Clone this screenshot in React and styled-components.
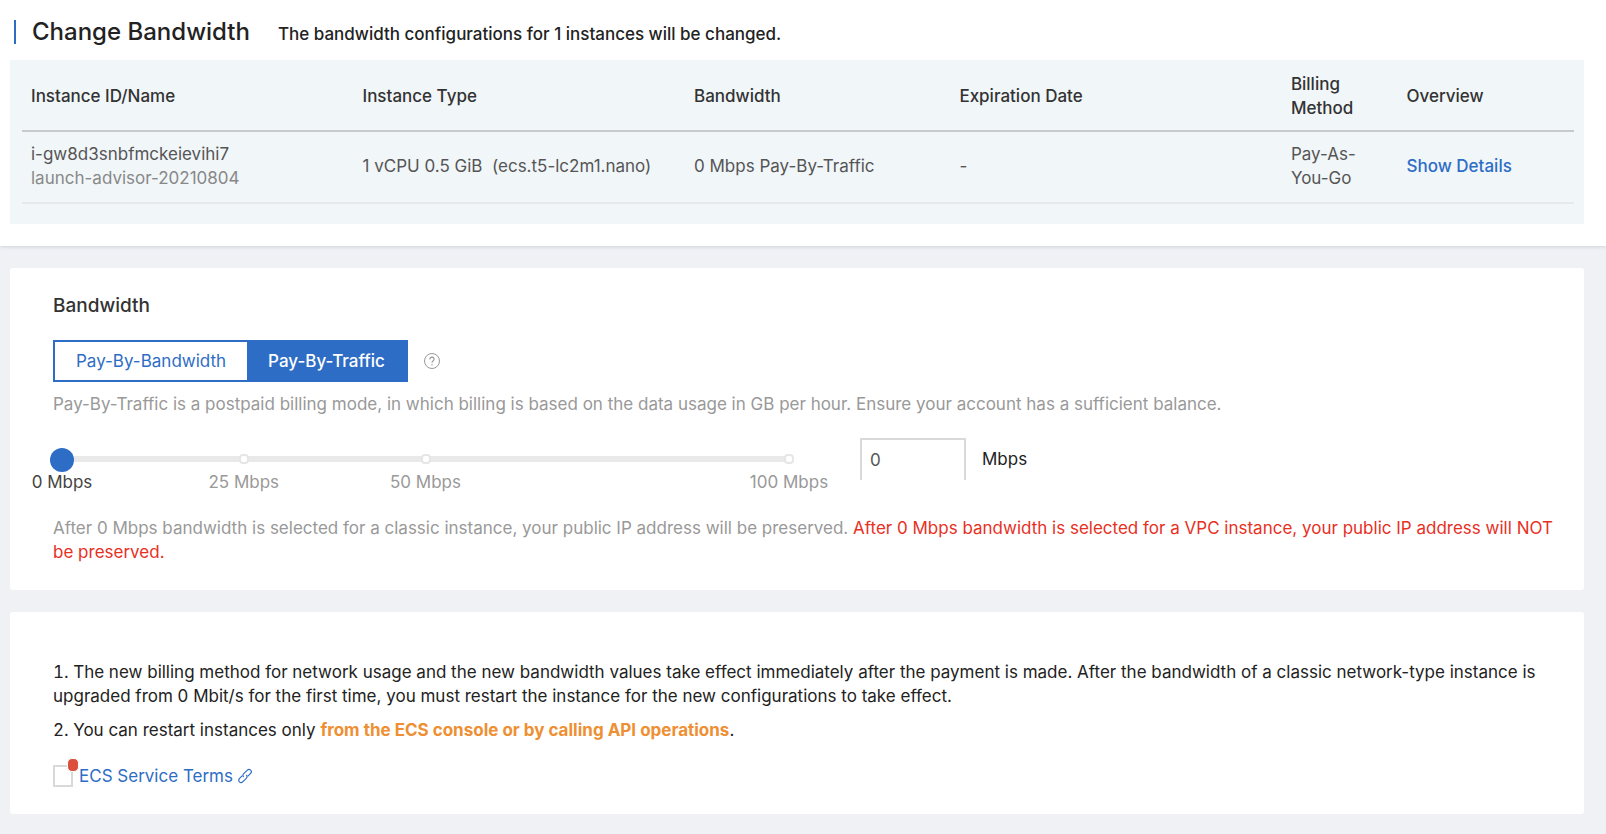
import React, { useState } from "react";
import styled, { createGlobalStyle } from "styled-components";

const blue = "#2e6dc5";

const GlobalStyle = createGlobalStyle`
  *, *::before, *::after { box-sizing: border-box; }
  body {
    margin: 0;
    background: #eff1f5;
    color: #222;
    font: 400 17px/24px Inter, "Liberation Sans", sans-serif;
  }
  button, input { font: inherit; }
`;

const Page = styled.div`
  display: flex;
  flex-direction: column;
  gap: 22px;
  padding-bottom: 20px;
`;

const Header = styled.header`
  background: #fff;
  padding: 14px 22px 22px 10px;
  box-shadow: 0 1px 4px rgba(40, 60, 80, 0.16);
`;

const TitleRow = styled.div`
  display: flex;
  align-items: baseline;
  margin: 0 0 10px 4px;

  &::before {
    content: "";
    align-self: center;
    width: 2px;
    height: 24px;
    background: ${blue};
  }
`;

const Title = styled.h1`
  margin: 0 28px 0 16px;
  font-size: 24px;
  line-height: 36px;
  font-weight: 500;
`;

const Subtitle = styled.p`
  margin: 0;
  font-weight: 500;
`;

const TablePanel = styled.div`
  background: #f1f6f9;
  padding: 0 10px 20px 12px;
`;

const Table = styled.table`
  width: 100%;
  table-layout: fixed;
  border-spacing: 0;
  text-align: left;
`;

const HeadCell = styled.th`
  width: ${(p) => p.$width};
  padding: 12px 9px 10px;
  border-bottom: 2px solid #c9cacb;
  color: #333;
  font-weight: 500;
`;

const Cell = styled.td`
  padding: 10px 9px 12px;
  border-bottom: 2px solid #e7e9ea;
  color: #555;
`;

const InstanceName = styled.div`
  color: #888;
`;

const TextLink = styled.a`
  color: ${blue};
  font-weight: ${(p) => (p.$strong ? 500 : 400)};
  text-decoration: none;
`;

const Card = styled.section`
  margin: 0 22px 0 10px;
  padding: ${(p) => p.$top}px 30px 26px 43px;
  border-radius: 3px;
  background: #fff;
`;

const CardTitle = styled.h2`
  margin: 0 0 22px;
  color: #333;
  font-size: 19px;
  line-height: 24px;
  font-weight: 500;
`;

const BillingRow = styled.div`
  display: flex;
  align-items: center;
  gap: 15px;
`;

const Segmented = styled.div`
  display: flex;
  border: 2px solid ${blue};
`;

const Segment = styled.button`
  height: 38px;
  padding: 0 21px;
  border: 0;
  background: ${(p) => (p.$active ? blue : "#fff")};
  color: ${(p) => (p.$active ? "#fff" : blue)};
  font-weight: ${(p) => (p.$active ? 500 : 400)};
  cursor: pointer;
`;

const HelpButton = styled.button`
  display: flex;
  padding: 0;
  border: 0;
  background: none;
  color: #999;
`;

const Hint = styled.p`
  margin: 10px 0 22px;
  color: #999;
`;

const Note = styled.p`
  margin: 22px 0 0;
  color: #999;
`;

const Warning = styled.span`
  color: #e8301f;
`;

const SliderRow = styled.div`
  display: flex;
  align-items: flex-start;
`;

const Slider = styled.div`
  display: grid;
  flex: 0 1 751px;
  margin: 10px 59px 0 -3px;
`;

const Range = styled.input`
  grid-area: 1 / 1;
  appearance: none;
  width: 100%;
  height: 24px;
  margin: 0;
  background: linear-gradient(#e9e9e9, #e9e9e9) center 8px / calc(100% - 24px) 6px no-repeat;

  &::-webkit-slider-thumb {
    appearance: none;
    width: 24px;
    height: 24px;
    border-radius: 50%;
    background: ${blue};
  }
`;

const Scale = styled.div`
  grid-area: 1 / 1;
  display: flex;
  padding: 6px 12px 0;
  pointer-events: none;
`;

const ScaleSpan = styled.div`
  display: flex;
  flex: ${(p) => p.$span} 1 0;
  justify-content: flex-end;
`;

const Tick = styled.div`
  display: flex;
  flex-direction: column;
  align-items: center;
  gap: 6px;
  width: 0;
  white-space: nowrap;
  color: ${(p) => (p.$active ? "#444" : "#999")};
`;

const Dot = styled.i`
  width: 10px;
  height: 10px;
  border: 2px solid #e6e6e6;
  border-radius: 4px;
  background: #fff;
  visibility: ${(p) => (p.$hidden ? "hidden" : "visible")};
`;

const Amount = styled.label`
  display: flex;
  align-items: center;
  gap: 16px;
`;

const AmountInput = styled.input`
  width: 106px;
  height: 42px;
  padding: 0 8px;
  border: 2px solid #d9d9d9;
  border-bottom: 0;
  border-radius: 0;
  background: #fff;
  color: #555;
`;

const Notes = styled.ol`
  display: flex;
  flex-direction: column;
  gap: 10px;
  margin: 0 0 22px;
  padding: 0;
  list-style: decimal inside;
`;

const ConsoleLink = styled.a`
  color: #ee8f33;
  font-weight: 700;
  text-decoration: none;
`;

const Terms = styled.div`
  display: flex;
  align-items: center;
  gap: 6px;
`;

const CheckWrap = styled.span`
  position: relative;
  display: flex;
`;

const Checkbox = styled.input`
  appearance: none;
  width: 20px;
  height: 22px;
  margin: 0;
  border: 2px solid #d9d9d9;
  background: #fff;

  &:checked { background: ${blue}; }
`;

const Badge = styled.span`
  position: absolute;
  top: -7px;
  right: -6px;
  width: 12px;
  height: 14px;
  border: 1px solid #fff;
  border-radius: 5px;
  background: #dc4f3c;
`;

const TermsLink = styled(TextLink)`
  display: flex;
  align-items: center;
  gap: 4px;
`;

function HelpIcon() {
  return (
    <svg width="18" height="18" viewBox="0 0 18 18" fill="none" stroke="currentColor" aria-hidden="true">
      <circle cx="9" cy="9" r="7.5" strokeWidth="1" />
      <path d="M6.9 7.4C6.9 6 7.8 5.1 9 5.1s2.1.9 2.1 2.1c0 1.5-2.1 1.6-2.1 3.5" strokeWidth="1.1" />
      <circle cx="9" cy="12.7" r=".7" fill="currentColor" stroke="none" />
    </svg>
  );
}

function ChainIcon() {
  return (
    <svg width="16" height="16" viewBox="0 0 16 16" fill="none" stroke="currentColor" strokeWidth="1.2" strokeLinecap="round" aria-hidden="true">
      <path d="M6.3 8.6C5.7 7.5 5.9 6.5 6.7 5.7l3.4-3.3c1.1-1.1 2.5-1.2 3.5-.3 1 1 .9 2.4-.2 3.5l-2.2 2.2" />
      <path d="M9.7 7.4c.6 1.1.4 2.1-.4 2.9l-3.4 3.3c-1.1 1.1-2.5 1.2-3.5.3-1-1-.9-2.4.2-3.5l2.2-2.2" />
    </svg>
  );
}

const columns = [
  ["Instance ID/Name", "21.36%"],
  ["Instance Type", "21.36%"],
  ["Bandwidth", "17.1%"],
  ["Expiration Date", "21.36%"],
  ["Billing Method", "7.45%"],
  ["Overview", "11.37%"],
];

const ticks = [
  { value: 0, span: 0 },
  { value: 25, span: 25 },
  { value: 50, span: 25 },
  { value: 100, span: 50 },
];

const modes = ["Pay-By-Bandwidth", "Pay-By-Traffic"];

export default function App() {
  const [mode, setMode] = useState("Pay-By-Traffic");
  const [mbps, setMbps] = useState(0);

  return (
    <>
      <GlobalStyle />
      <Page>
        <Header>
          <TitleRow>
            <Title>Change Bandwidth</Title>
            <Subtitle>The bandwidth configurations for 1 instances will be changed.</Subtitle>
          </TitleRow>
          <TablePanel>
            <Table>
              <thead>
                <tr>
                  {columns.map(([name, width]) => (
                    <HeadCell key={name} $width={width} scope="col">{name}</HeadCell>
                  ))}
                </tr>
              </thead>
              <tbody>
                <tr>
                  <Cell>
                    i-gw8d3snbfmckeievihi7
                    <InstanceName>launch-advisor-20210804</InstanceName>
                  </Cell>
                  <Cell>1 vCPU 0.5 GiB&nbsp; (ecs.t5-lc2m1.nano)</Cell>
                  <Cell>0 Mbps Pay-By-Traffic</Cell>
                  <Cell>-</Cell>
                  <Cell>Pay-As-You-Go</Cell>
                  <Cell><TextLink $strong href="#details">Show Details</TextLink></Cell>
                </tr>
              </tbody>
            </Table>
          </TablePanel>
        </Header>

        <Card $top={26}>
          <CardTitle>Bandwidth</CardTitle>
          <BillingRow>
            <Segmented role="group" aria-label="Billing mode">
              {modes.map((name) => (
                <Segment
                  key={name}
                  type="button"
                  $active={name === mode}
                  aria-pressed={name === mode}
                  onClick={() => setMode(name)}
                >
                  {name}
                </Segment>
              ))}
            </Segmented>
            <HelpButton type="button" aria-label="Help"><HelpIcon /></HelpButton>
          </BillingRow>
          <Hint>
            Pay-By-Traffic is a postpaid billing mode, in which billing is based on the data usage in GB per hour. Ensure your account has a sufficient balance.
          </Hint>
          <SliderRow>
            <Slider>
              <Range
                type="range"
                min="0"
                max="100"
                value={mbps}
                aria-label="Bandwidth"
                onChange={(e) => setMbps(Number(e.target.value))}
              />
              <Scale>
                {ticks.map(({ value, span }) => (
                  <ScaleSpan key={value} $span={span}>
                    <Tick $active={value === mbps}>
                      <Dot $hidden={value === mbps} />
                      {value} Mbps
                    </Tick>
                  </ScaleSpan>
                ))}
              </Scale>
            </Slider>
            <Amount>
              <AmountInput
                type="text"
                inputMode="numeric"
                value={mbps}
                onChange={(e) => setMbps(Math.min(100, Number(e.target.value) || 0))}
              />
              Mbps
            </Amount>
          </SliderRow>
          <Note>
            After 0 Mbps bandwidth is selected for a classic instance, your public IP address will be preserved.{" "}
            <Warning>After 0 Mbps bandwidth is selected for a VPC instance, your public IP address will NOT be preserved.</Warning>
          </Note>
        </Card>

        <Card $top={48}>
          <Notes>
            <li>
              The new billing method for network usage and the new bandwidth values take effect immediately after the payment is made. After the bandwidth of a classic network-type instance is upgraded from 0 Mbit/s for the first time, you must restart the instance for the new configurations to take effect.
            </li>
            <li>
              You can restart instances only <ConsoleLink href="#console">from the ECS console or by calling API operations</ConsoleLink>.
            </li>
          </Notes>
          <Terms>
            <CheckWrap>
              <Checkbox type="checkbox" aria-labelledby="terms" />
              <Badge />
            </CheckWrap>
            <TermsLink id="terms" href="#terms">ECS Service Terms <ChainIcon /></TermsLink>
          </Terms>
        </Card>
      </Page>
    </>
  );
}
